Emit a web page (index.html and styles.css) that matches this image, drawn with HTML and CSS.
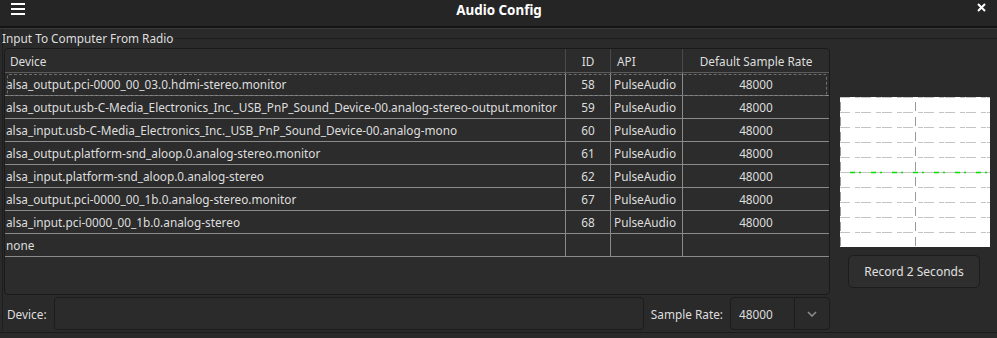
FILE: index.html
```html
<!DOCTYPE html>
<html lang="en">
<head>
    <meta charset="UTF-8">
    <title>Audio Config</title>
    <link rel="stylesheet" href="styles.css">
</head>
<body>
    <div class="titlebar">
        <span class="menu-btn">
            <svg width="14" height="12" viewBox="0 0 14 12"><path d="M0 1h14M0 6h14M0 11h14" stroke="#fff" stroke-width="2"/></svg>
        </span>
        <span class="title">Audio Config</span>
        <span class="close-btn">
            <svg width="9" height="9" viewBox="0 0 9 9"><path d="M1 1l7 7M8 1l-7 7" stroke="#fff" stroke-width="2"/></svg>
        </span>
    </div>
    <div class="strip"></div>

    <div class="group">
        <div class="group-head"><span>Input To Computer From Radio</span></div>
        <div class="panel">
            <div class="left">
                <div class="table-wrap">
                    <table class="devices">
                        <thead>
                            <tr>
                                <th class="c-dev">Device</th>
                                <th class="c-id">ID</th>
                                <th class="c-api">API</th>
                                <th class="c-rate">Default Sample Rate</th>
                            </tr>
                        </thead>
                        <tbody>
                            <tr><td>alsa_output.pci-0000_00_03.0.hdmi-stereo.monitor</td><td class="num">58</td><td>PulseAudio</td><td class="num">48000</td></tr>
                            <tr><td>alsa_output.usb-C-Media_Electronics_Inc._USB_PnP_Sound_Device-00.analog-stereo-output.monitor</td><td class="num">59</td><td>PulseAudio</td><td class="num">48000</td></tr>
                            <tr><td>alsa_input.usb-C-Media_Electronics_Inc._USB_PnP_Sound_Device-00.analog-mono</td><td class="num">60</td><td>PulseAudio</td><td class="num">48000</td></tr>
                            <tr><td>alsa_output.platform-snd_aloop.0.analog-stereo.monitor</td><td class="num">61</td><td>PulseAudio</td><td class="num">48000</td></tr>
                            <tr><td>alsa_input.platform-snd_aloop.0.analog-stereo</td><td class="num">62</td><td>PulseAudio</td><td class="num">48000</td></tr>
                            <tr><td>alsa_output.pci-0000_00_1b.0.analog-stereo.monitor</td><td class="num">67</td><td>PulseAudio</td><td class="num">48000</td></tr>
                            <tr><td>alsa_input.pci-0000_00_1b.0.analog-stereo</td><td class="num">68</td><td>PulseAudio</td><td class="num">48000</td></tr>
                            <tr><td>none</td><td></td><td></td><td></td></tr>
                        </tbody>
                    </table>
                    <div class="focus-rect"></div>
                </div>
                <div class="form-row">
                    <label class="lbl">Device:</label>
                    <div class="field"></div>
                    <label class="lbl">Sample Rate:</label>
                    <div class="combo">
                        <span class="combo-val">48000</span>
                        <span class="combo-arrow">
                            <svg width="10" height="6" viewBox="0 0 10 6"><path d="M1 1l4 4 4-4" fill="none" stroke="#8a8a8a" stroke-width="1.6"/></svg>
                        </span>
                    </div>
                </div>
            </div>
            <div class="right">
                <svg class="scope" width="150" height="150" viewBox="0 0 150 150">
                    <rect width="150" height="150" fill="#fff"/>
                    <g stroke="#c4c4c4" stroke-width="1" stroke-dasharray="10 5 5 1">
                        <path d="M0 0.5h150M0 15.5h150M0 30.5h150M0 45.5h150M0 60.5h150M0 75.5h150M0 90.5h150M0 105.5h150M0 120.5h150M0 135.5h150"/>
                    </g>
                    <g stroke="#9a9a9a" stroke-width="1" stroke-dasharray="9 6" stroke-dashoffset="-5">
                        <path d="M0.5 0v150M75.5 0v150"/>
                    </g>
                    <path d="M0 75.5h150" stroke="#00e000" stroke-width="1.5" stroke-dasharray="5 4 2 10" stroke-dashoffset="-10"/>
                </svg>
                <button class="record">Record 2 Seconds</button>
            </div>
        </div>
    </div>
    <div class="group-head next"><span>Output From Computer To Speaker/Headphones</span></div>
</body>
</html>
```

FILE: styles.css
```css
body {
    margin: 0;
    background-color: #2a2a2a;
    color: #dedede;
    font-family: "Noto Sans", sans-serif;
    font-size: 11.8px;
    width: 997px;
    height: 338px;
    overflow: hidden;
}

.titlebar {
    height: 26px;
    background-color: #252525;
    border-bottom: 2px solid #141414;
    display: flex;
    align-items: center;
    position: relative;
}

.menu-btn {
    margin-left: 11px;
    margin-top: -8px;
    display: flex;
}

.title {
    flex: 1;
    text-align: center;
    font-weight: bold;
    font-size: 13.4px;
    color: #fff;
    margin-top: -7px;
    margin-left: -4px;
}

.close-btn {
    margin-right: 11px;
    margin-top: -11px;
    display: flex;
}

.strip {
    height: 9px;
    border-top: 1px solid #3a3a3a;
}

.group {
    border-left: 1px solid #1e1e1e;
    margin-left: 2px;
}

.group-head {
    height: 16px;
    display: flex;
    align-items: center;
    margin-top: -8px;
}

.group-head::after {
    content: "";
    flex: 1;
    border-top: 1px solid #1c1c1c;
    margin-top: 1px;
}

.group-head span {
    padding-right: 1px;
    margin-left: -1px;
}

.group-head.next {
    margin-top: 2px;
    border-top: 1px solid #1c1c1c;
    padding-top: 3px;
}

.group-head.next::after {
    border: none;
}

.panel {
    display: grid;
    grid-template-columns: 826px 160px;
    column-gap: 10px;
    margin-top: 2px;
    padding-left: 1px;
}

.table-wrap {
    position: relative;
    height: 245px;
    border: 1px solid #1a1a1a;
    border-radius: 4px;
    background-color: #2c2c2c;
    overflow: hidden;
}

.devices {
    border-collapse: collapse;
    width: 824px;
    table-layout: fixed;
}

.devices th {
    font-weight: normal;
    height: 23px;
    border-bottom: 1px solid #5c5c5c;
    border-left: 1px solid #4a4a4a;
    text-align: center;
    padding: 0;
}

.devices th.c-dev {
    border-left: none;
    text-align: left;
    padding-left: 5px;
    width: 555px;
}

.devices th.c-id {
    width: 44px;
}

.devices th.c-api {
    text-align: left;
    padding-left: 6px;
    width: 65px;
}

.devices td {
    height: 22px;
    padding: 0 0 0 3px;
    border-bottom: 1px solid #8a8a8a;
    border-left: 1px solid #8a8a8a;
    white-space: nowrap;
    overflow: hidden;
    line-height: 14px;
    vertical-align: middle;
}

.devices td:first-child {
    border-left: none;
    padding-left: 1px;
}

.devices td.num {
    text-align: center;
    padding-left: 0;
}

.focus-rect {
    position: absolute;
    top: 25px;
    left: 2px;
    right: 2px;
    height: 20px;
    border: 1px dashed #6e6e6e;
    border-radius: 2px;
}

.form-row {
    display: flex;
    align-items: center;
    margin-top: 2px;
    height: 33px;
}

.lbl {
    padding: 0 7px 0 3px;
}

.field {
    flex: 1;
    height: 31px;
    border: 1px solid #1c1c1c;
    border-radius: 4px;
    background-color: #2b2b2b;
    margin-right: 4px;
}

.combo {
    display: flex;
    width: 98px;
    height: 31px;
    border: 1px solid #1c1c1c;
    border-radius: 4px;
    margin-left: 0;
}

.combo-val {
    flex: 1;
    display: flex;
    align-items: center;
    padding-left: 8px;
    border-right: 1px solid #1c1c1c;
}

.combo-arrow {
    width: 34px;
    display: flex;
    align-items: center;
    justify-content: center;
}

.right {
    padding-top: 49px;
}

.scope {
    display: block;
}

.record {
    display: block;
    margin: 8px 0 0 8px;
    width: 132px;
    height: 33px;
    background-color: #2e2e2e;
    color: #e0e0e0;
    border: 1px solid #1c1c1c;
    border-radius: 5px;
    font-family: "Noto Sans", sans-serif;
    font-size: 12px;
}
```
